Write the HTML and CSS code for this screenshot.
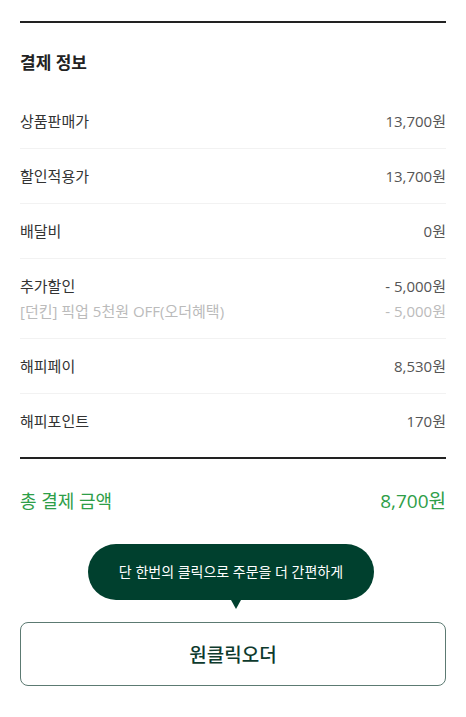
FILE: index.html
```html
<!DOCTYPE html>
<html lang="ko">
<head>
    <meta charset="UTF-8">
    <meta name="viewport" content="width=device-width, initial-scale=1.0">
    <title>결제 정보</title>
    <link rel="stylesheet" href="styles.css">
</head>
<body>
    <section class="pay-info">
        <h2 class="pay-title">결제 정보</h2>
        <ul class="pay-list">
            <li class="pay-row">
                <span class="label">상품판매가</span>
                <span class="value">13,700원</span>
            </li>
            <li class="pay-row">
                <span class="label">할인적용가</span>
                <span class="value">13,700원</span>
            </li>
            <li class="pay-row">
                <span class="label">배달비</span>
                <span class="value">0원</span>
            </li>
            <li class="pay-row pay-row-multi">
                <div class="line">
                    <span class="label">추가할인</span>
                    <span class="value">- 5,000원</span>
                </div>
                <div class="line sub">
                    <span class="label">[던킨] 픽업 5천원 OFF(오더혜택)</span>
                    <span class="value">- 5,000원</span>
                </div>
            </li>
            <li class="pay-row">
                <span class="label">해피페이</span>
                <span class="value">8,530원</span>
            </li>
            <li class="pay-row">
                <span class="label">해피포인트</span>
                <span class="value">170원</span>
            </li>
        </ul>
    </section>

    <div class="pay-total">
        <span>총 결제 금액</span>
        <span class="total-value">8,700원</span>
    </div>

    <div class="order-area">
        <div class="tooltip">단 한번의 클릭으로 주문을 더 간편하게</div>
        <button class="one-click" type="button">원클릭오더</button>
    </div>
</body>
</html>
```

FILE: styles.css
```css
body {
    font-family: "Open Sans", "Noto Sans CJK KR", sans-serif;
    margin: 0;
    padding: 21px 20px 0;
    background-color: #fff;
    color: #333;
}
.pay-info {
    border-top: 2px solid #222;
    border-bottom: 2px solid #222;
    padding-bottom: 9px;
}
.pay-title {
    font-size: 17px;
    font-weight: bold;
    line-height: 24px;
    margin: 0;
    padding: 28px 0 19px;
    color: #222;
}
.pay-list {
    list-style: none;
    margin: 0;
    padding: 0;
}
.pay-row {
    display: flex;
    justify-content: space-between;
    align-items: center;
    font-size: 15px;
    line-height: 21px;
    padding: 17px 0 16px;
    border-bottom: 1px solid #f2f2f2;
}
.pay-row:last-child {
    border-bottom: none;
}
.pay-row-multi {
    flex-direction: column;
    align-items: stretch;
}
.line {
    display: flex;
    justify-content: space-between;
}
.line.sub {
    margin-top: 4px;
    color: #bbb;
}
.line.sub .value {
    color: #bbb;
}
.value {
    color: #555;
}
.pay-total {
    display: flex;
    justify-content: space-between;
    align-items: center;
    font-size: 18px;
    line-height: 24px;
    color: #2e9e48;
    padding: 30px 0 0;
}
.total-value {
    font-size: 19px;
}
.order-area {
    display: flex;
    flex-direction: column;
    align-items: center;
    padding-top: 31px;
}
.tooltip {
    position: relative;
    background-color: #00402e;
    color: #fff;
    font-size: 14px;
    line-height: 56px;
    padding: 0 31px;
    border-radius: 28px;
    margin-left: -4px;
}
.tooltip::after {
    content: "";
    position: absolute;
    left: 50%;
    bottom: -9px;
    margin-left: 0;
    border-left: 5px solid transparent;
    border-right: 5px solid transparent;
    border-top: 9px solid #00402e;
}
.one-click {
    width: 100%;
    height: 64px;
    margin-top: 22px;
    background-color: #fff;
    border: 1px solid #5c7a72;
    border-radius: 8px;
    font-family: inherit;
    font-size: 19px;
    font-weight: 500;
    color: #0d3a2d;
    cursor: pointer;
}
```
